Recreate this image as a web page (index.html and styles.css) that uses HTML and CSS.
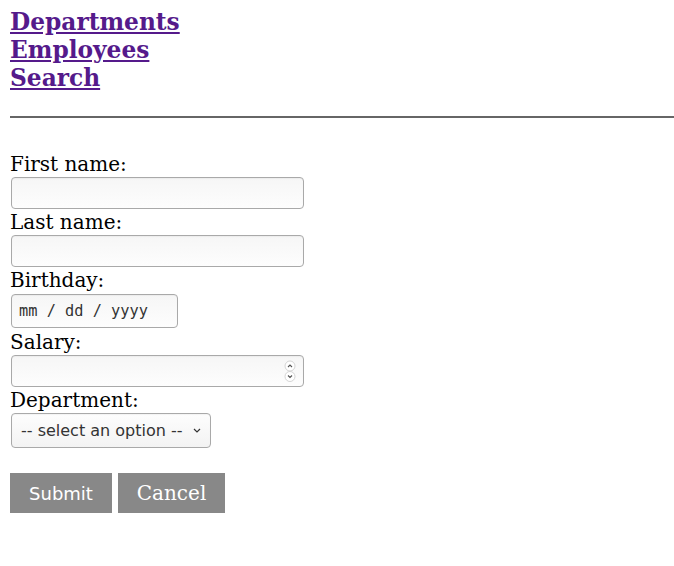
FILE: index.html
```html
<!DOCTYPE html>
<html>
<head>
<meta charset="utf-8">
<title>Employee</title>
<link rel="stylesheet" href="styles.css">
</head>
<body>
<nav class="nav">
  <a class="nav-link" href="#">Departments</a>
  <a class="nav-link" href="#">Employees</a>
  <a class="nav-link" href="#">Search</a>
</nav>
<hr class="rule">
<form class="form">
  <label class="label" for="fn">First name:</label>
  <input class="field field-text" id="fn" type="text">
  <label class="label" for="ln">Last name:</label>
  <input class="field field-text" id="ln" type="text">
  <label class="label" for="bd">Birthday:</label>
  <input class="field field-date" id="bd" type="text" placeholder="mm / dd / yyyy">
  <label class="label" for="sal">Salary:</label>
  <span class="number-wrap">
    <input class="field field-text field-number" id="sal" type="text">
    <svg class="spinner" width="14" height="24" viewBox="0 0 14 24">
      <circle cx="7" cy="6" r="5" fill="#fff" stroke="#cfcfcf" stroke-width="0.9"/>
      <circle cx="7" cy="16.5" r="5" fill="#fff" stroke="#cfcfcf" stroke-width="0.9"/>
      <path d="M5 7 L7 5 L9 7" fill="none" stroke="#555" stroke-width="1.1"/>
      <path d="M5 15.5 L7 17.5 L9 15.5" fill="none" stroke="#555" stroke-width="1.1"/>
    </svg>
  </span>
  <label class="label" for="dep">Department:</label>
  <span class="select-wrap">
    <select class="field field-select" id="dep">
      <option>-- select an option --</option>
    </select>
    <svg class="chevron" width="8" height="5" viewBox="0 0 8 5">
      <path d="M1 1 L4 4 L7 1" fill="none" stroke="#333" stroke-width="1.2"/>
    </svg>
  </span>
  <div class="actions">
    <button class="btn btn-submit" type="button">Submit</button>
    <a class="btn btn-cancel" href="#">Cancel</a>
  </div>
</form>
</body>
</html>
```

FILE: styles.css
```css
html, body {
  background: #fff;
}
body {
  margin: 8px 0 0 10px;
  font-family: "DejaVu Serif", serif;
  color: #000;
}
.nav {
  display: flex;
  flex-direction: column;
  align-items: flex-start;
}
.nav-link {
  font-size: 23.3px;
  font-weight: bold;
  line-height: 28px;
  color: #551a8b;
  text-decoration: underline;
}
.rule {
  margin: 24px 0 0 0;
  border: none;
  height: 2px;
  background: #666;
}
.form {
  display: flex;
  flex-direction: column;
  align-items: flex-start;
  padding-top: 35px;
}
.label {
  font-size: 20px;
  line-height: 23px;
}
.field {
  box-sizing: border-box;
  margin: 1px 0 2px 1px;
  border: 1px solid #a9a9a9;
  border-radius: 4px;
  background: linear-gradient(#f6f6f6, #fdfdfd);
  box-shadow: inset 0 1px 1px rgba(0,0,0,0.04);
  outline: none;
}
.field-text {
  width: 293px;
  height: 32px;
}
.field-date {
  width: 167px;
  height: 34px;
  margin: 2px 0 3px 1px;
  padding: 0 0 0 7px;
  font-family: "DejaVu Sans Mono", monospace;
  font-size: 15.3px;
}
.field-date::placeholder {
  color: #333;
  opacity: 1;
}
.number-wrap,
.select-wrap {
  position: relative;
  display: block;
}
.spinner {
  position: absolute;
  left: 273px;
  top: 6px;
}
.field-select {
  appearance: none;
  -webkit-appearance: none;
  width: 200px;
  height: 35px;
  padding: 0 0 0 9px;
  font-family: "DejaVu Sans", sans-serif;
  font-size: 16px;
  color: #333;
  background: linear-gradient(#fdfdfd, #f3f3f3);
}
.chevron {
  position: absolute;
  left: 183px;
  top: 16px;
}
.actions {
  display: flex;
  gap: 6px;
  margin-top: 23px;
}
.btn {
  box-sizing: border-box;
  height: 40px;
  padding: 0 19px;
  border: none;
  background: #888;
  color: #fff;
  display: flex;
  align-items: center;
  text-decoration: none;
}
.btn-submit {
  width: 102px;
  justify-content: center;
  font-family: "DejaVu Sans", sans-serif;
  font-size: 18px;
}
.btn-cancel {
  width: 107px;
  justify-content: center;
  font-family: "DejaVu Serif", serif;
  font-size: 20px;
}
```
